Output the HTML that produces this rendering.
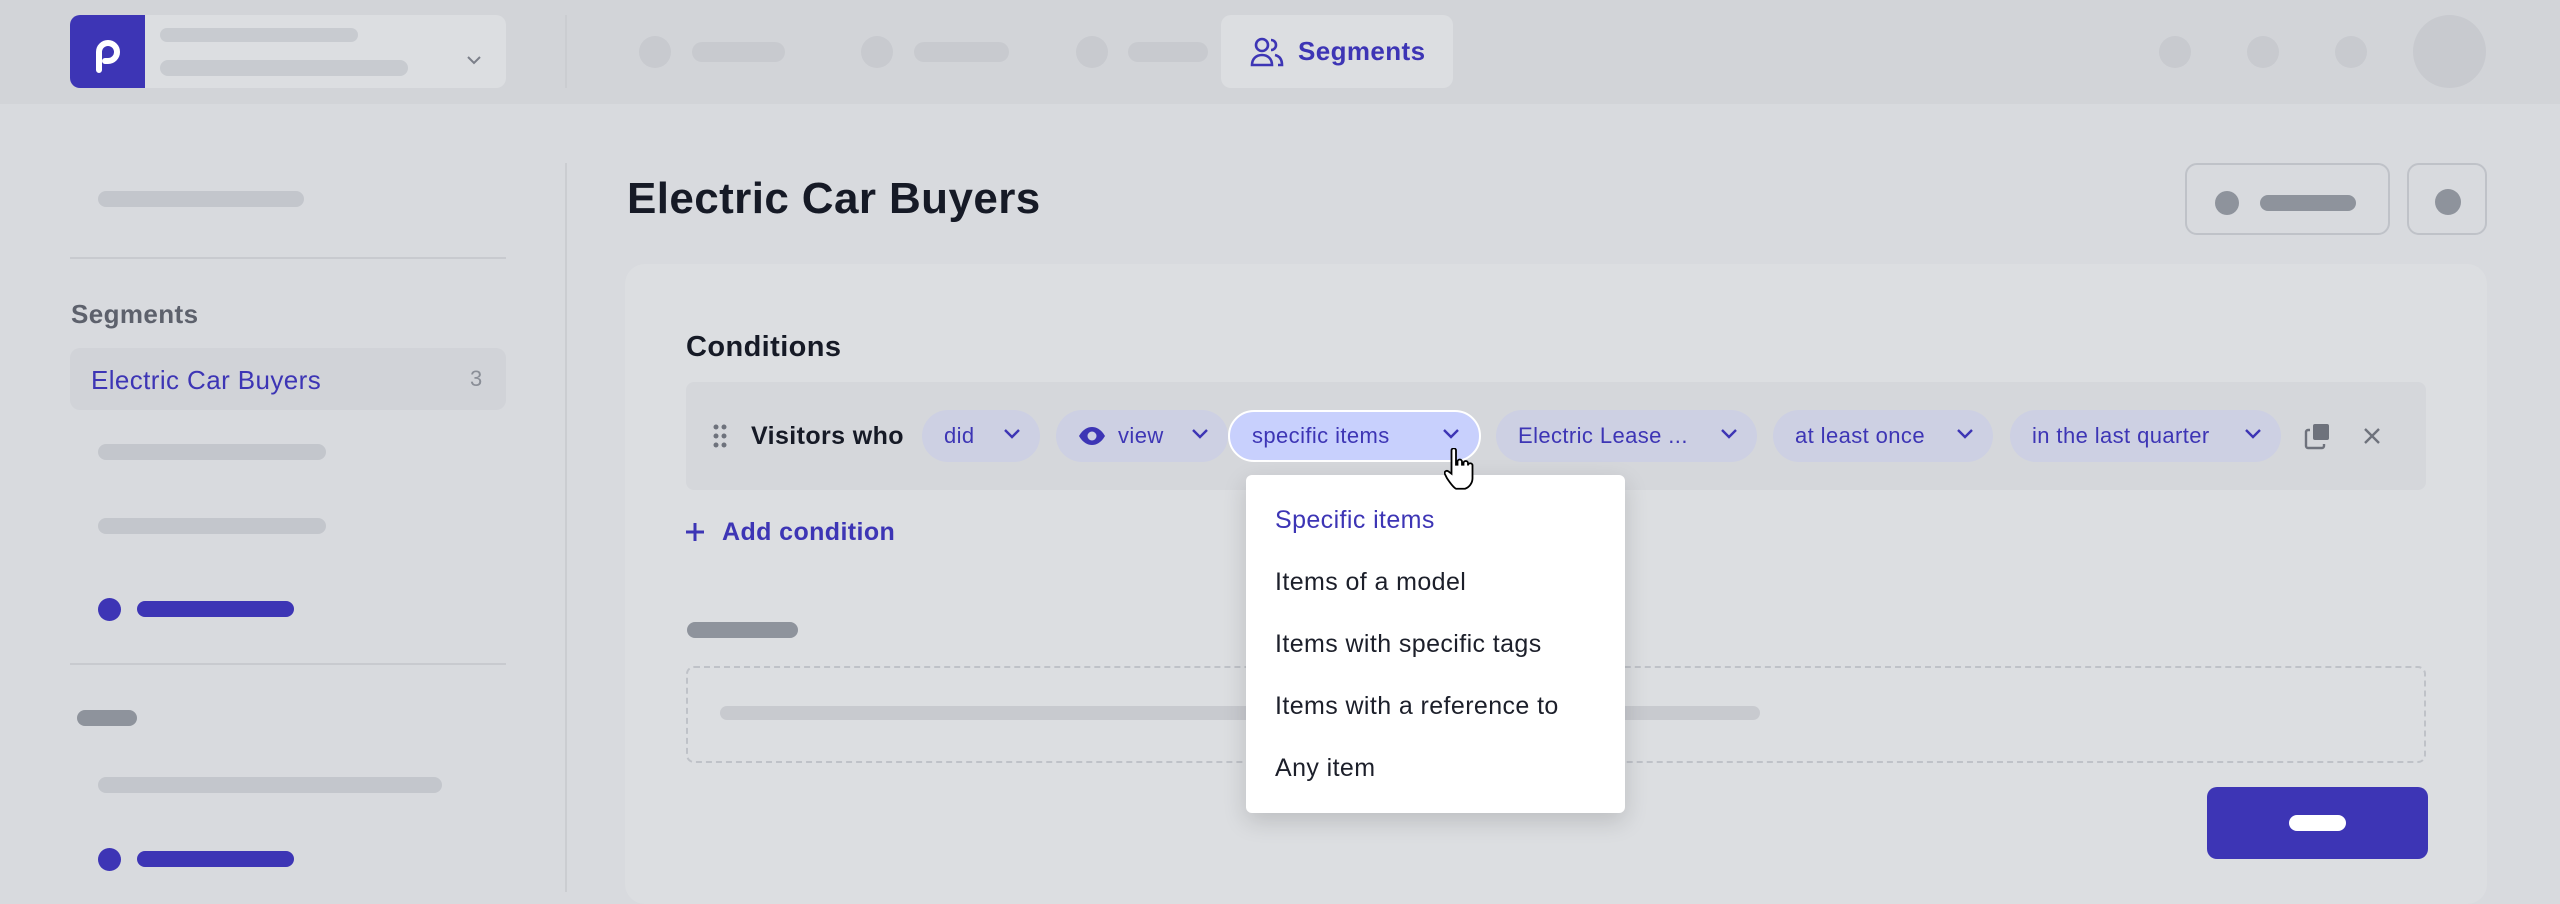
<!DOCTYPE html>
<html><head><meta charset="utf-8"><style>
*{box-sizing:border-box;margin:0;padding:0}
body{width:2560px;height:892px;overflow:hidden;background:#d8dade;font-family:"Liberation Sans",sans-serif;position:relative;letter-spacing:0.4px}
.a{position:absolute}
.bar{position:absolute;border-radius:10px;background:#c3c6cc}
.dot{position:absolute;border-radius:50%;background:#c8cacf}
.chip{position:absolute;top:410px;height:52px;border-radius:26px;background:#cdd0e3;color:#3d35b5;font-size:22px;line-height:52px;padding-left:22px}
.chip svg{position:absolute;right:18px;top:17px}
.mi{position:absolute;left:29px;font-size:25px;color:#1c1f2a}
</style></head><body>
<div class="a" style="left:0;top:0;width:2560px;height:104px;background:#d2d4d8"></div>
<div class="a" style="left:70px;top:15px;width:436px;height:73px;background:#dcdee1;border-radius:10px"></div>
<div class="a" style="left:70px;top:15px;width:75px;height:73px;background:#3d35b5;border-radius:10px 0 0 10px"></div>
<svg class="a" style="left:90px;top:34px" width="36" height="40" viewBox="0 0 36 40"><path d="M9 36V18a9 9 0 1 1 9 9h-3" fill="none" stroke="#fff" stroke-width="6" stroke-linecap="round"/></svg>
<div class="bar" style="left:160px;top:28px;width:198px;height:14px;background:#c8cbd0"></div>
<div class="bar" style="left:160px;top:60px;width:248px;height:16px;background:#c8cbd0"></div>
<svg class="a" style="left:466px;top:55px" width="16" height="10"><path d="M2 2l6 6 6-6" fill="none" stroke="#7b7f89" stroke-width="2"/></svg>
<div class="a" style="left:565px;top:15px;width:2px;height:73px;background:#cbcdd1"></div>
<div class="dot" style="left:639px;top:36px;width:32px;height:32px"></div><div class="bar" style="left:692px;top:42px;width:93px;height:20px;background:#c8cacf"></div>
<div class="dot" style="left:861px;top:36px;width:32px;height:32px"></div><div class="bar" style="left:914px;top:42px;width:95px;height:20px;background:#c8cacf"></div>
<div class="dot" style="left:1076px;top:36px;width:32px;height:32px"></div><div class="bar" style="left:1128px;top:42px;width:80px;height:20px;background:#c8cacf"></div>
<div class="a" style="left:1221px;top:15px;width:232px;height:73px;background:#dcdee1;border-radius:10px"></div>
<svg class="a" style="left:1250px;top:36px" width="34" height="32" viewBox="0 0 34 32" fill="none" stroke="#3d35b5" stroke-width="2.6"><circle cx="12" cy="9" r="6"/><path d="M2 29c0-6 4-10 10-10s10 4 10 10z"/><path d="M21 4a5 5 0 0 1 0 10M25 19c4 1 7 4 7 10h-4"/></svg>
<div class="a" style="left:1298px;top:36px;font-size:26px;font-weight:600;color:#3d35b5">Segments</div>
<div class="dot" style="left:2159px;top:36px;width:32px;height:32px"></div>
<div class="dot" style="left:2247px;top:36px;width:32px;height:32px"></div>
<div class="dot" style="left:2335px;top:36px;width:32px;height:32px"></div>
<div class="dot" style="left:2413px;top:15px;width:73px;height:73px"></div>

<div class="bar" style="left:98px;top:191px;width:206px;height:16px"></div>
<div class="a" style="left:70px;top:257px;width:436px;height:2px;background:#c8cacf"></div>
<div class="a" style="left:71px;top:299px;font-size:26px;font-weight:600;color:#5d616c">Segments</div>
<div class="a" style="left:70px;top:348px;width:436px;height:62px;background:#d1d3d8;border-radius:10px"></div>
<div class="a" style="left:91px;top:365px;font-size:26px;color:#3d35b5">Electric Car Buyers</div>
<div class="a" style="left:470px;top:366px;font-size:22px;color:#8a8e97">3</div>
<div class="bar" style="left:98px;top:444px;width:228px;height:16px"></div>
<div class="bar" style="left:98px;top:518px;width:228px;height:16px"></div>
<div class="a" style="left:98px;top:598px;width:23px;height:23px;border-radius:50%;background:#3d35b5"></div>
<div class="bar" style="left:137px;top:601px;width:157px;height:16px;background:#3d35b5"></div>
<div class="a" style="left:70px;top:663px;width:436px;height:2px;background:#c8cacf"></div>
<div class="bar" style="left:77px;top:710px;width:60px;height:16px;background:#8e939c"></div>
<div class="bar" style="left:98px;top:777px;width:344px;height:16px"></div>
<div class="a" style="left:98px;top:848px;width:23px;height:23px;border-radius:50%;background:#3d35b5"></div>
<div class="bar" style="left:137px;top:851px;width:157px;height:16px;background:#3d35b5"></div>
<div class="a" style="left:565px;top:163px;width:2px;height:729px;background:#cbcdd1"></div>

<div class="a" style="left:627px;top:174px;font-size:44px;font-weight:600;color:#161a26">Electric Car Buyers</div>
<div class="a" style="left:2185px;top:163px;width:205px;height:72px;border:2px solid #bfc2c8;border-radius:12px;background:#d8dade"></div>
<div class="a" style="left:2215px;top:191px;width:24px;height:24px;border-radius:50%;background:#8e939c"></div>
<div class="bar" style="left:2260px;top:195px;width:96px;height:16px;background:#8e939c"></div>
<div class="a" style="left:2407px;top:163px;width:80px;height:72px;border:2px solid #bfc2c8;border-radius:12px"></div>
<div class="a" style="left:2435px;top:189px;width:26px;height:26px;border-radius:50%;background:#8e939c"></div>

<div class="a" style="left:625px;top:264px;width:1862px;height:640px;background:#dcdee1;border-radius:20px"></div>
<div class="a" style="left:686px;top:331px;font-size:29px;font-weight:600;color:#161a26">Conditions</div>
<div class="a" style="left:686px;top:382px;width:1740px;height:108px;background:#d5d7db;border-radius:8px"></div>
<svg class="a" style="left:712px;top:423px" width="16" height="26"><g fill="#6e727c"><circle cx="4" cy="4" r="2.5"/><circle cx="12" cy="4" r="2.5"/><circle cx="4" cy="13" r="2.5"/><circle cx="12" cy="13" r="2.5"/><circle cx="4" cy="22" r="2.5"/><circle cx="12" cy="22" r="2.5"/></g></svg>
<div class="a" style="left:751px;top:422px;font-size:25px;font-weight:600;color:#161a26">Visitors who</div>
<div class="chip" style="left:922px;width:118px">did<svg width="20" height="14"><path d="M3 3l7 7 7-7" fill="none" stroke="#3d35b5" stroke-width="2.4"/></svg></div>
<div class="chip" style="left:1056px;width:172px;padding-left:62px">view<svg width="20" height="14"><path d="M3 3l7 7 7-7" fill="none" stroke="#3d35b5" stroke-width="2.4"/></svg>
<svg style="position:absolute;left:22px;top:16px" width="28" height="20" viewBox="0 0 28 20"><path d="M1 10C5 3 10 1 14 1s9 2 13 9c-4 7-9 9-13 9S5 17 1 10z" fill="#3d35b5"/><circle cx="14" cy="10" r="4.5" fill="#cdd0e3"/></svg></div>
<div class="chip" style="left:1228px;width:253px;background:#c8d0fd;border:2px solid #fff;line-height:48px;padding-left:22px">specific items<svg width="20" height="14" style="top:15px"><path d="M3 3l7 7 7-7" fill="none" stroke="#3d35b5" stroke-width="2.4"/></svg></div>
<div class="chip" style="left:1496px;width:261px">Electric Lease ...<svg width="20" height="14"><path d="M3 3l7 7 7-7" fill="none" stroke="#3d35b5" stroke-width="2.4"/></svg></div>
<div class="chip" style="left:1773px;width:220px">at least once<svg width="20" height="14"><path d="M3 3l7 7 7-7" fill="none" stroke="#3d35b5" stroke-width="2.4"/></svg></div>
<div class="chip" style="left:2010px;width:271px">in the last quarter<svg width="20" height="14"><path d="M3 3l7 7 7-7" fill="none" stroke="#3d35b5" stroke-width="2.4"/></svg></div>
<svg class="a" style="left:2304px;top:422px" width="28" height="28" viewBox="0 0 28 28"><rect x="9" y="2" width="16" height="16" rx="2" fill="#6e727c"/><path d="M6 8H4a2 2 0 0 0-2 2v14a2 2 0 0 0 2 2h14a2 2 0 0 0 2-2v-2" fill="none" stroke="#6e727c" stroke-width="2.4"/></svg>
<svg class="a" style="left:2363px;top:427px" width="18" height="18"><path d="M2 2l14 14M16 2L2 16" stroke="#6e727c" stroke-width="2.4"/></svg>
<svg class="a" style="left:684px;top:520px" width="22" height="24"><path d="M11 3v18M2 12h18" stroke="#3d35b5" stroke-width="3"/></svg>
<div class="a" style="left:722px;top:518px;font-size:25px;font-weight:600;color:#3d35b5">Add condition</div>
<div class="bar" style="left:687px;top:622px;width:111px;height:16px;background:#8e939c"></div>
<div class="a" style="left:686px;top:666px;width:1740px;height:97px;border:2px dashed #bfc2c8;border-radius:8px"></div>
<div class="bar" style="left:720px;top:706px;width:1040px;height:14px;background:#c8cacf"></div>
<div class="a" style="left:2207px;top:787px;width:221px;height:72px;background:#3d35b5;border-radius:10px"></div>
<div class="bar" style="left:2289px;top:815px;width:57px;height:16px;background:#fff"></div>

<div class="a" style="left:1246px;top:475px;width:379px;height:338px;background:#fff;border-radius:6px;box-shadow:0 8px 24px rgba(0,0,0,.15)">
<div class="mi" style="top:31px;color:#3d35b5">Specific items</div>
<div class="mi" style="top:93px">Items of a model</div>
<div class="mi" style="top:155px">Items with specific tags</div>
<div class="mi" style="top:217px">Items with a reference to</div>
<div class="mi" style="top:279px">Any item</div>
</div>
<svg class="a" style="left:1444px;top:448px" width="30" height="44" viewBox="0 0 20 29"><path d="M5 1.5a1.5 1.5 0 0 1 3 0V11h1V9a1.5 1.5 0 0 1 3 0v2h1v-1a1.5 1.5 0 0 1 3 0v1.5a1.5 1.5 0 0 1 3 0V20c0 3-2 6-5 7H8c-2-1-4-4-6-7l-1.5-3a1.5 1.5 0 0 1 2.5-1.5L5 17z" fill="#fff" stroke="#000" stroke-width="1.2"/></svg>
</body></html>
